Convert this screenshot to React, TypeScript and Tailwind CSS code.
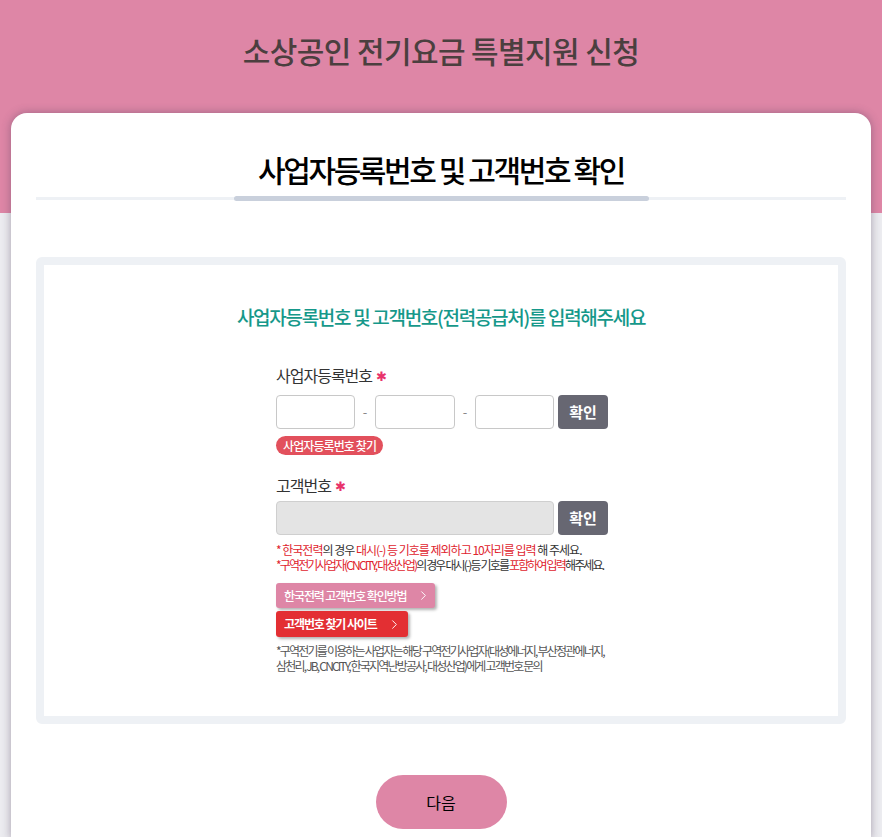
import { ChevronRight } from 'lucide-react';

const font = { fontFamily: '"Noto Sans CJK KR", "Noto Sans", sans-serif' };

function Label({ children }: { children: React.ReactNode }) {
  return (
    <div className="flex items-center gap-1 text-[16px] text-[#333] leading-none tracking-[-1px]">
      <span>{children}</span>
      <span className="text-[#e8336b] text-[13px]">✱</span>
    </div>
  );
}

function ConfirmButton() {
  return (
    <button className="w-[50px] h-[34px] rounded-[4px] bg-[#676772] text-white text-[15px] font-bold shrink-0">
      확인
    </button>
  );
}

export default function App() {
  return (
    <div className="min-h-[837px] bg-[#ececf0] overflow-hidden" style={font}>
      {/* Header */}
      <div className="h-[213px] bg-[#de86a6] pt-[28px] text-center">
        <h1 className="text-[30px] font-medium text-[#4b3f3f] tracking-[-0.6px]">소상공인 전기요금 특별지원 신청</h1>
      </div>

      {/* Card */}
      <div className="-mt-[100px] mx-[11px] bg-white rounded-t-[16px] shadow-[0_0_10px_rgba(80,60,90,0.45)] px-[25px] pb-[10px]">
        <div className="pt-[36px] text-center">
          <h2 className="text-[30px] font-medium text-black tracking-[-2.4px] leading-[40px]">사업자등록번호 및 고객번호 확인</h2>
        </div>
        <div className="relative mt-[8px] h-[3px] bg-[#eef1f5]">
          <div className="absolute left-[198px] right-[197px] -top-[1px] h-[5px] rounded-full bg-[#c9d0dc]" />
        </div>

        {/* Form box */}
        <div className="mt-[57px] border-[8px] border-[#eef1f5] rounded-[6px] bg-white pt-[38px] pb-[43px]">
          <p className="text-center text-[19px] font-medium text-[#16988a] tracking-[-1.3px] leading-[28px]">
            사업자등록번호 및 고객번호(전력공급처)를 입력해주세요
          </p>

          <div className="ml-[232px] mt-[36px] w-[340px]">
            <Label>사업자등록번호</Label>
            <div className="mt-[12px] flex items-center">
              <input className="w-[79px] h-[34px] rounded-[4px] border border-[#c8c8c8] bg-white" />
              <span className="w-[20px] text-center text-[#888] text-[13px]">-</span>
              <input className="w-[80px] h-[34px] rounded-[4px] border border-[#c8c8c8] bg-white" />
              <span className="w-[20px] text-center text-[#888] text-[13px]">-</span>
              <input className="w-[79px] h-[34px] rounded-[4px] border border-[#c8c8c8] bg-white" />
              <span className="w-[4px]" />
              <ConfirmButton />
            </div>
            <span className="mt-[7px] inline-block h-[19px] px-[7px] rounded-full bg-[#e2505c] text-white text-[12px] font-medium leading-[19px] tracking-[-0.9px]">
              사업자등록번호 찾기
            </span>

            <div className="mt-[21px]">
              <Label>고객번호</Label>
            </div>
            <div className="mt-[8px] flex items-center gap-[4px]">
              <input disabled className="w-[278px] h-[34px] rounded-[4px] border border-[#cfcfcf] bg-[#e4e4e4]" />
              <ConfirmButton />
            </div>

            <div className="mt-[7px] text-[12px] leading-[15px] tracking-[-1px] whitespace-nowrap">
              <p className="text-[#333]">
                <span className="text-[#e0242e]">* 한국전력</span>의 경우 <span className="text-[#e0242e]">대시(-) 등 기호를 제외하고 10자리를 입력</span> 해 주세요.
              </p>
              <p className="text-[#333] tracking-[-1.85px]">
                <span className="text-[#e0242e]">*구역전기사업자(CNCITY, 대성산업)</span>의 경우 대시(-)등 기호를 <span className="text-[#e0242e]">포함하여 입력</span>해주세요.
              </p>
            </div>

            <div className="mt-[11px] flex flex-col items-start gap-[3px]">
              <button className="h-[25px] pl-[8px] pr-[4px] flex items-center gap-[10px] rounded-[3px] bg-[#de86a6] text-white text-[12px] font-medium tracking-[-1.1px] shadow-[2px_2px_3px_rgba(0,0,0,0.3)]">
                한국전력 고객번호 확인방법
                <ChevronRight size={15} strokeWidth={1.5} />
              </button>
              <button className="h-[26px] pl-[8px] pr-[6px] flex items-center gap-[10px] rounded-[3px] bg-[#e32f33] text-white text-[12px] font-bold tracking-[-1.1px] shadow-[2px_2px_3px_rgba(0,0,0,0.3)]">
                고객번호 찾기 사이트
                <ChevronRight size={15} strokeWidth={1.5} />
              </button>
            </div>

            <div className="mt-[6px] text-[12px] leading-[15px] tracking-[-1.8px] text-[#555] whitespace-nowrap">
              <p>*구역전기를 이용하는 사업자는 해당 구역전기사업자(대성에너지, 부산정관에너지,</p>
              <p>삼천리, JB, CNCITY, 한국지역난방공사, 대성산업)에게 고객번호 문의</p>
            </div>
          </div>
        </div>

        <div className="mt-[51px] flex justify-center">
          <button className="w-[131px] h-[54px] rounded-full bg-[#de86a6] text-black text-[16px]">다음</button>
        </div>
      </div>
    </div>
  );
}
